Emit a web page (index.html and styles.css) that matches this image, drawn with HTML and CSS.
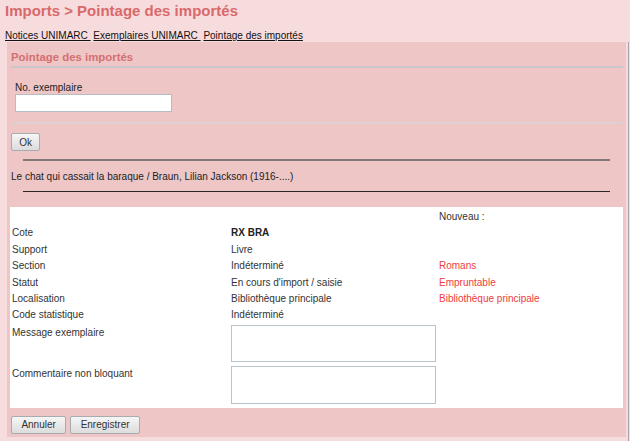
FILE: index.html
```html
<!DOCTYPE html>
<html lang="fr">
<head>
<meta charset="utf-8">
<title>Imports &gt; Pointage des importés</title>
<link rel="stylesheet" href="styles.css">
</head>
<body>
<h1 class="page-title">Imports &gt; Pointage des importés</h1>
<nav class="tabs">
  <a href="#" class="tab">Notices UNIMARC&nbsp;</a> <a href="#" class="tab">Exemplaires UNIMARC&nbsp;</a> <a href="#" class="tab">Pointage des importés</a>
</nav>
<div class="main">
  <section class="panel">
    <h2 class="panel-title">Pointage des importés</h2>
    <div class="panel-rule"></div>
    <div class="field">
      <label class="field-label" for="ex">No. exemplaire</label>
      <input class="text-input" id="ex" type="text">
    </div>
    <div class="soft-rule"></div>
    <button class="btn btn-ok" type="button">Ok</button>
    <div class="notice-rule thick"></div>
    <p class="notice">Le chat qui cassait la baraque / Braun, Lilian Jackson (1916-....)</p>
    <div class="notice-rule thin"></div>
    <div class="detail">
      <span class="cell"></span><span class="cell"></span><span class="cell">Nouveau :</span>
      <span class="cell">Cote</span><span class="cell strong">RX BRA</span><span class="cell"></span>
      <span class="cell">Support</span><span class="cell">Livre</span><span class="cell"></span>
      <span class="cell">Section</span><span class="cell">Indéterminé</span><span class="cell new">Romans</span>
      <span class="cell">Statut</span><span class="cell">En cours d'import / saisie</span><span class="cell new">Empruntable</span>
      <span class="cell">Localisation</span><span class="cell">Bibliothèque principale</span><span class="cell new">Bibliothèque principale</span>
      <span class="cell">Code statistique</span><span class="cell">Indéterminé</span><span class="cell"></span>
      <span class="cell tall-label">Message exemplaire</span><span class="cell tall"><textarea class="area"></textarea></span><span class="cell"></span>
      <span class="cell tall-label">Commentaire non bloquant</span><span class="cell tall"><textarea class="area"></textarea></span><span class="cell"></span>
    </div>
    <div class="actions">
      <button class="btn" type="button">Annuler</button>
      <button class="btn" type="button">Enregistrer</button>
    </div>
  </section>
</div>
</body>
</html>
```
FILE: styles.css
```css
html, body {
  margin: 0;
  padding: 0;
}
body {
  background: #f7dcdd;
  font-family: "Liberation Sans", Arial, sans-serif;
  font-size: 10px;
  color: #333;
  width: 630px;
  height: 441px;
  overflow: hidden;
}
.page-title {
  margin: 0;
  padding: 2px 0 0 5px;
  font-size: 15px;
  font-weight: bold;
  line-height: 17px;
  color: #d9696b;
}
.tabs {
  margin-top: 11px;
  padding-left: 5px;
  line-height: 12px;
  height: 12px;
}
.tab {
  color: #111;
  text-decoration: underline;
}
.main {
  margin-left: 7px;
  width: 621px;
  border-right: 1px solid #aaa2a8;
  padding-bottom: 6px;
}
.panel {
  width: 613px;
  background: #eec6c6;
  padding: 9px 3px 3px 3px;
}
.panel-title {
  margin: 0 0 0 1px;
  font-size: 11.4px;
  line-height: 13px;
  font-weight: bold;
  color: #d56f71;
}
.panel-rule {
  height: 2px;
  margin: 2px 0 0 1px;
  background: #cbc6ca;
}
.field {
  margin-top: 13.5px;
  padding-left: 5px;
  display: flex;
  flex-direction: column;
  align-items: flex-start;
}
.field-label {
  line-height: 11.5px;
  color: #222;
}
.text-input {
  margin: 1.3px 0 0 0;
  box-sizing: border-box;
  width: 157px;
  height: 17.4px;
  border: 1px solid #b4bcc4;
  background: #fff;
  padding: 0 2px;
  font: inherit;
}
.soft-rule {
  height: 2px;
  margin: 10.5px 0 0 1px;
  background: #ddd0d3;
}
.btn {
  box-sizing: border-box;
  height: 17.4px;
  padding: 0 9.4px;
  border: 1px solid #a9acaf;
  border-radius: 2px;
  background: linear-gradient(#f6f6f6, #dcdcdc);
  font-family: "Liberation Sans", Arial, sans-serif;
  font-size: 10px;
  color: #333;
  line-height: 15px;
}
.btn-ok {
  margin: 9.3px 0 0 1px;
  padding: 0 7.2px;
  display: block;
}
.notice-rule {
  margin: 0 13px;
}
.notice-rule.thick {
  height: 2px;
  margin-top: 8px;
  background: #827878;
}
.notice {
  margin: 9.8px 0 0 1px;
  line-height: 11.5px;
  color: #222;
}
.notice-rule.thin {
  height: 1px;
  margin-top: 8.7px;
  background: #2a2626;
}
.detail {
  margin-top: 15.2px;
  background: #fff;
  padding: 2px 0 0.8px 2px;
  display: grid;
  grid-template-columns: 219px 208px 1fr;
  grid-template-rows: repeat(7, 16.4px) 41.7px 41.7px;
  line-height: 16.4px;
}
.cell {
  white-space: nowrap;
  color: #333;
}
.cell.strong {
  font-weight: bold;
  color: #222;
}
.cell.new {
  color: #f03c3c;
}
.tall-label {
  line-height: 11.5px;
  padding-top: 3px;
}
.tall {
  display: block;
  line-height: 0;
}
.area {
  margin: 1px 0 0 0;
  box-sizing: border-box;
  width: 205px;
  height: 37.4px;
  border: 1px solid #b9c3ca;
  background: #fff;
  resize: none;
  padding: 2px;
  display: block;
}
.actions {
  margin-top: 8.3px;
  margin-left: 1px;
  display: flex;
  gap: 4px;
}
```
